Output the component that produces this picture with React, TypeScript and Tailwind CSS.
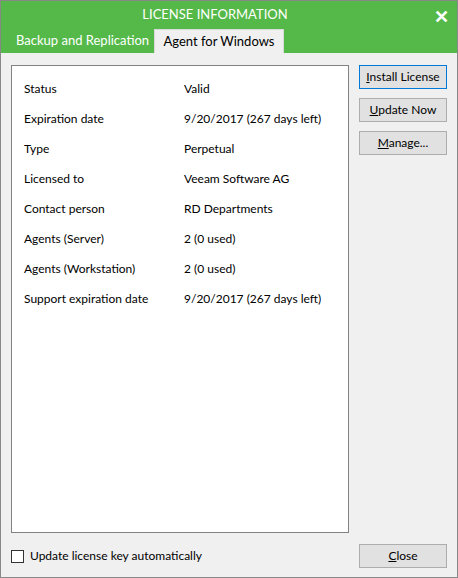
export default function App() {
  const rows: [string, string][] = [
    ["Status", "Valid"],
    ["Expiration date", "9/20/2017 (267 days left)"],
    ["Type", "Perpetual"],
    ["Licensed to", "Veeam Software AG"],
    ["Contact person", "RD Departments"],
    ["Agents (Server)", "2 (0 used)"],
    ["Agents (Workstation)", "2 (0 used)"],
    ["Support expiration date", "9/20/2017 (267 days left)"],
  ];
  const btn = "w-[88px] h-[24px] border border-[#adadad] bg-[#e1e1e1] text-[12px] text-black flex items-center justify-center whitespace-nowrap";
  return (
    <div className="w-[458px] h-[578px] border border-[#888] bg-[#f0f0f0] flex flex-col text-[12px] text-black" style={{ fontFamily: 'Lato, "Open Sans", sans-serif' }}>
      <div className="bg-[#54b948] h-[52px] flex flex-col shrink-0">
        <div className="h-[28px] relative flex items-center justify-center text-white text-[13px] pr-[28px]">
          LICENSE INFORMATION
          <span className="absolute right-[8px] top-[2px] text-[18px] font-bold">✕</span>
        </div>
        <div className="flex items-end h-[24px]">
          <div className="w-[153px] pl-[15px] h-[24px] flex items-center text-white text-[13px] whitespace-nowrap">Backup and Replication</div>
          <div className="w-[130px] h-[24px] bg-[#f0f0f0] border-t border-x border-[#d9d9d9] flex items-center justify-center text-[13px] whitespace-nowrap">Agent for Windows</div>
        </div>
      </div>
      <div className="flex-1 flex px-[10px] pt-[12px] gap-[10px]">
        <div className="w-[338px] h-[468px] bg-white border border-[#828282] pt-[14px] pl-[12px]">
          {rows.map(([a, b]) => (
            <div key={a} className="flex h-[30px] items-start">
              <div className="w-[160px]">{a}</div>
              <div>{b}</div>
            </div>
          ))}
        </div>
        <div className="flex flex-col gap-[9px]">
          <div className={btn + " !border-[#0078d7]"}><span><u>I</u>nstall License</span></div>
          <div className={btn}><span><u>U</u>pdate Now</span></div>
          <div className={btn}><span><u>M</u>anage...</span></div>
        </div>
      </div>
      <div className="flex items-center justify-between px-[10px] pb-[9px]">
        <div className="flex items-center gap-[6px]">
          <div className="w-[13px] h-[13px] border border-[#333] bg-white" />
          <span>Update license key automatically</span>
        </div>
        <div className={btn}><span><u>C</u>lose</span></div>
      </div>
    </div>
  );
}
